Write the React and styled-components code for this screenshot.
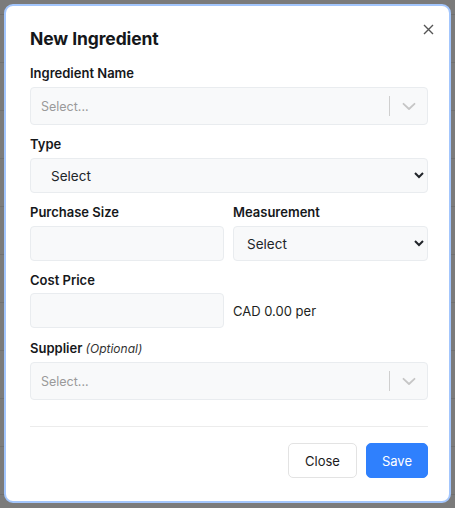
import * as React from "react";
import styled, { createGlobalStyle } from "styled-components";

const GlobalStyle = createGlobalStyle`
  html, body {
    margin: 0;
    padding: 0;
    background: #7b7b7b;
  }
  body {
    font-family: Inter, "Noto Sans", "Liberation Sans", sans-serif;
    color: #212529;
  }
  * {
    box-sizing: border-box;
  }
`;

const Backdrop = styled.div`
  width: 455px;
  height: 508px;
  padding: 4px 4px 5px 4px;
  background-color: #7b7b7b;
  background-image: repeating-linear-gradient(
    to bottom,
    transparent 0px,
    transparent 14px,
    #707070 14px,
    #707070 15px,
    transparent 15px,
    transparent 48px
  );
`;

const Dialog = styled.div`
  width: 447px;
  height: 499px;
  background: #fff;
  border: 2px solid #a3c6fd;
  border-radius: 9px;
  padding: 21px 21px 0 24px;
  display: flex;
  flex-direction: column;
`;

const Header = styled.div`
  display: flex;
  justify-content: space-between;
  align-items: flex-start;
  height: 36px;
`;

const Title = styled.h2`
  margin: 0;
  font-size: 17.5px;
  font-weight: 700;
  line-height: 24px;
  color: #15171a;
  letter-spacing: -0.1px;
`;

const CloseX = styled.button`
  border: none;
  background: transparent;
  padding: 0;
  margin: -6px -8px 0 0;
  width: 16px;
  height: 16px;
  display: flex;
  align-items: center;
  justify-content: center;
  color: #555;
  cursor: pointer;
`;

const Field = styled.div`
  display: flex;
  flex-direction: column;
  margin-bottom: ${(p) => (p.$mb === undefined ? 9 : p.$mb)}px;
`;

const Row = styled.div`
  display: grid;
  grid-template-columns: 194px 195px;
  column-gap: 9px;
`;

const Label = styled.label`
  display: block;
  font-size: 13px;
  font-weight: 600;
  line-height: 20px;
  height: 20px;
  margin-bottom: ${(p) => (p.$mb === undefined ? 4 : p.$mb)}px;
  color: #16181b;
`;

const Optional = styled.em`
  font-weight: 400;
  font-size: 12px;
  line-height: 0;
  color: #333;
`;

const ReactSelect = styled.div`
  height: 38px;
  background: #f8f9fa;
  border: 1px solid #e9ecef;
  border-radius: 4px;
  display: flex;
  align-items: center;
`;

const Placeholder = styled.span`
  flex: 1;
  padding-left: 10px;
  font-size: 12.5px;
  color: #9a9a9a;
`;

const Separator = styled.span`
  width: 1px;
  height: 20px;
  background: #cfcfcf;
`;

const Indicator = styled.span`
  width: 37px;
  display: flex;
  justify-content: center;
  align-items: center;
  color: #c6c6c6;
`;

const NativeSelect = styled.select`
  height: 35px;
  width: 100%;
  background: #f8f9fa;
  border: 1px solid #e9ecef;
  border-radius: 4px;
  padding: 0 4px 0 ${(p) => p.$pl || 16}px;
  font-family: Inter, "Noto Sans", "Liberation Sans", sans-serif;
  font-size: 13.5px;
  color: #212529;
`;

const Input = styled.input`
  height: 35px;
  width: 100%;
  background: #f8f9fa;
  border: 1px solid #e9ecef;
  border-radius: 4px;
  padding: 0 10px;
  font-size: 13.5px;
`;

const PriceRow = styled.div`
  display: flex;
  align-items: center;
  gap: 9px;
`;

const PriceInput = styled(Input)`
  width: 194px;
`;

const PerText = styled.span`
  font-size: 13px;
  color: #1d1f22;
`;

const Divider = styled.hr`
  border: none;
  border-top: 1px solid #ececec;
  margin: 26px 0 16px 0;
  width: 398px;
`;

const Footer = styled.div`
  display: flex;
  justify-content: flex-end;
  gap: 9px;
  width: 398px;
`;

const Button = styled.button`
  height: 35px;
  padding: 0 ${(p) => (p.$primary ? 15 : 16)}px;
  border-radius: 5px;
  font-family: Inter, "Noto Sans", "Liberation Sans", sans-serif;
  font-size: 13px;
  border: 1px solid ${(p) => (p.$primary ? "#2f80fd" : "#e3e3e3")};
  background: ${(p) => (p.$primary ? "#2f80fd" : "#fff")};
  color: ${(p) => (p.$primary ? "#fff" : "#1b1b1b")};
  cursor: pointer;
`;

const Chevron = () => (
  <svg width="14" height="9" viewBox="0 0 14 9" fill="none" stroke="currentColor" strokeWidth="1.8" strokeLinecap="round" strokeLinejoin="round">
    <path d="M1.5 1.8L7 7L12.5 1.8" />
  </svg>
);

const SearchSelect = () => (
  <ReactSelect>
    <Placeholder>Select...</Placeholder>
    <Separator />
    <Indicator>
      <Chevron />
    </Indicator>
  </ReactSelect>
);

export default function App() {
  return (
    <>
      <GlobalStyle />
      <Backdrop>
        <Dialog>
          <Header>
            <Title>New Ingredient</Title>
            <CloseX aria-label="Close">
              <svg width="11" height="11" viewBox="0 0 11 11" stroke="currentColor" strokeWidth="1.4">
                <path d="M1 1L10 10M10 1L1 10" />
              </svg>
            </CloseX>
          </Header>
          <Field>
            <Label>Ingredient Name</Label>
            <SearchSelect />
          </Field>
          <Field>
            <Label>Type</Label>
            <NativeSelect defaultValue="">
              <option value="">Select</option>
            </NativeSelect>
          </Field>
          <Row>
            <Field>
              <Label>Purchase Size</Label>
              <Input />
            </Field>
            <Field>
              <Label>Measurement</Label>
              <NativeSelect $pl={9} defaultValue="">
                <option value="">Select</option>
              </NativeSelect>
            </Field>
          </Row>
          <Field $mb={10}>
            <Label $mb={3}>Cost Price</Label>
            <PriceRow>
              <PriceInput />
              <PerText>CAD 0.00 per</PerText>
            </PriceRow>
          </Field>
          <Field $mb={0}>
            <Label>
              Supplier <Optional>(Optional)</Optional>
            </Label>
            <SearchSelect />
          </Field>
          <Divider />
          <Footer>
            <Button>Close</Button>
            <Button $primary>Save</Button>
          </Footer>
        </Dialog>
      </Backdrop>
    </>
  );
}
